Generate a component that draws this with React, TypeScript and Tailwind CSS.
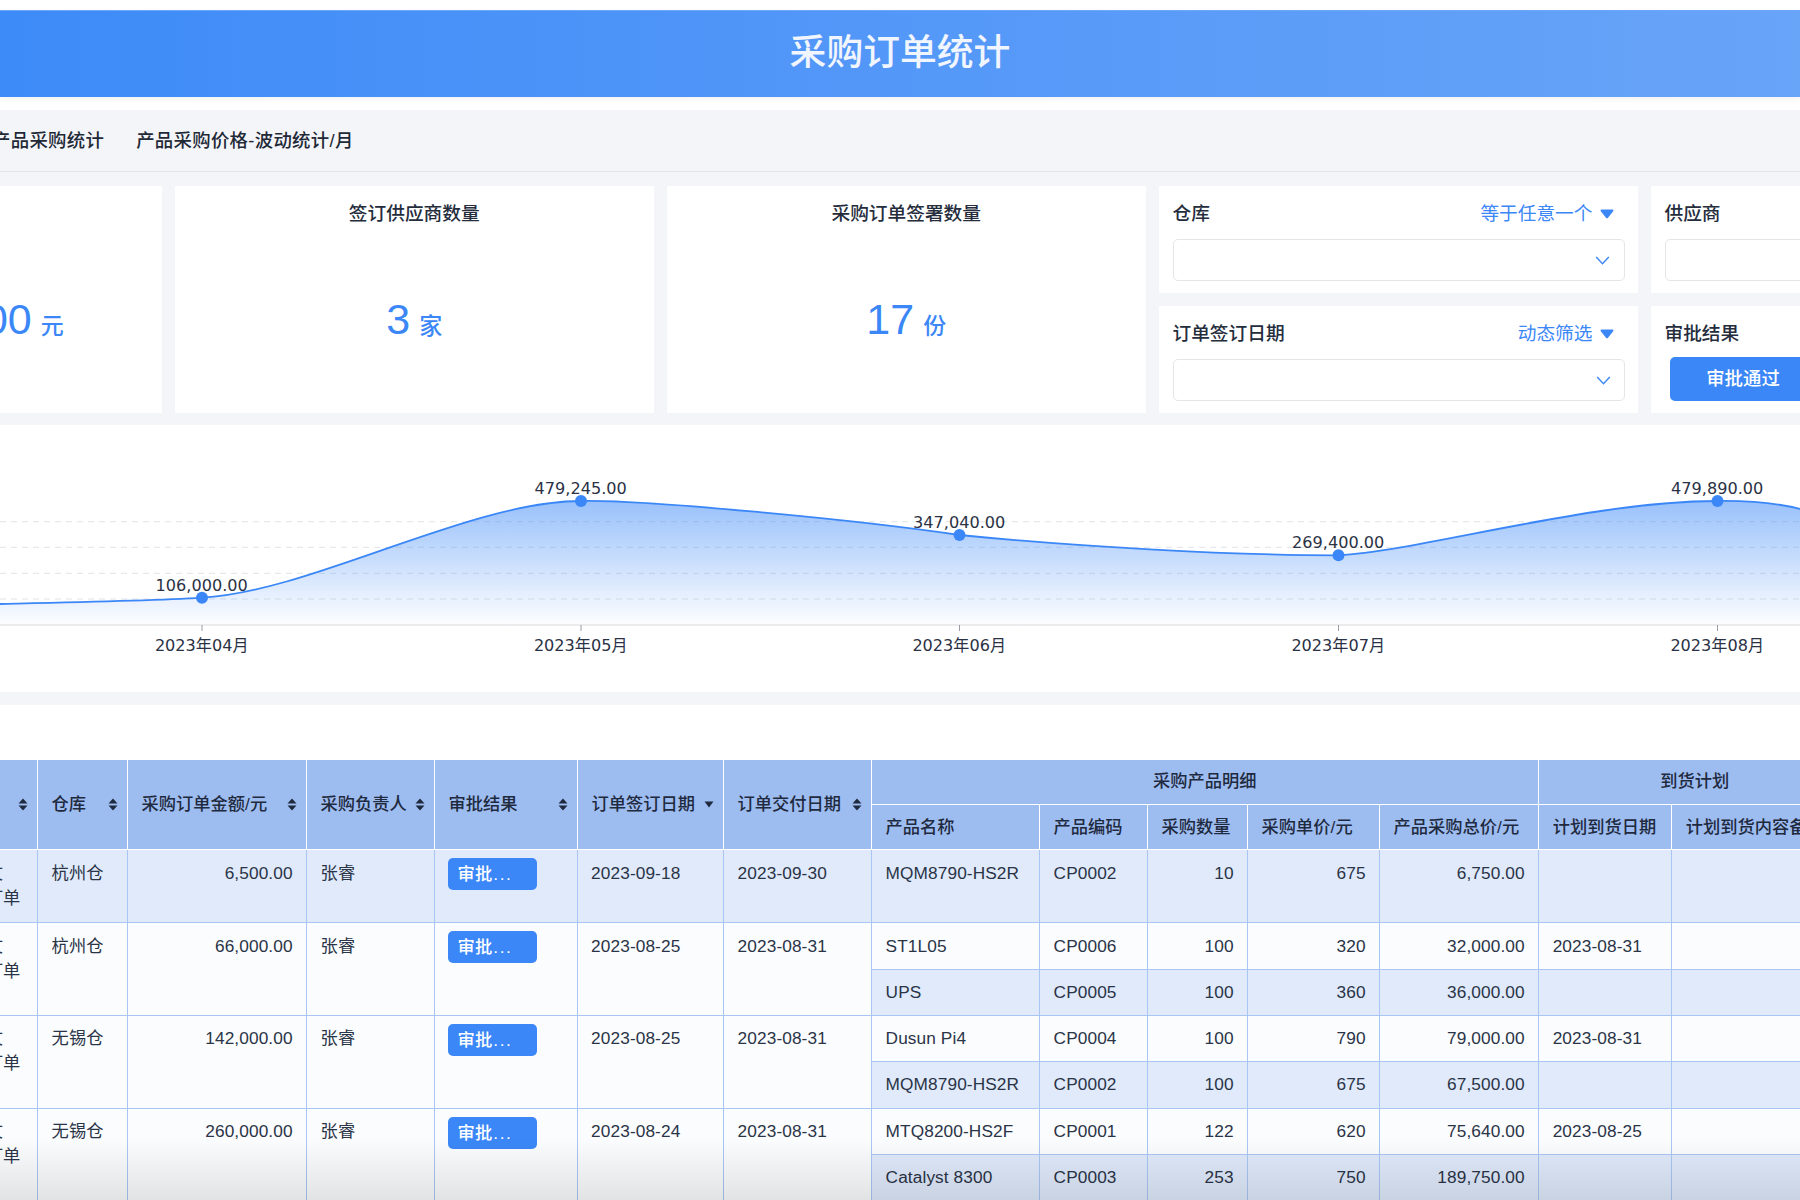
import React from "react";

const FONT = "[font-family:'Liberation_Sans','Noto_Sans_CJK_SC',sans-serif]";
const CHART_FONT = "[font-family:'DejaVu_Sans','Noto_Sans_CJK_SC',sans-serif]";

function Sort() {
  return (
    <svg viewBox="0 0 10 13" className="w-[10px] h-[13px] shrink-0 fill-[#1f2a3f]">
      <path d="M5 .5 9.5 5.5H.5Z" />
      <path d="M5 12.5 9.5 7.5H.5Z" />
    </svg>
  );
}

function SortDown() {
  return (
    <svg viewBox="0 0 10 7" className="w-[10px] h-[7px] shrink-0 fill-[#1f2a3f]">
      <path d="M5 6.5 9.5 .5H.5Z" />
    </svg>
  );
}

function Caret() {
  return (
    <svg viewBox="0 0 14 10" className="w-[14px] h-[10px] fill-[#3b87f7] ml-[7px]">
      <path d="M1.6 .6h10.8c.9 0 1.4 1 .8 1.7L7.8 8.9c-.4.5-1.2.5-1.6 0L.8 2.3C.2 1.6.7.6 1.6.6Z" />
    </svg>
  );
}

function Chevron() {
  return (
    <svg viewBox="0 0 16 10" className="w-[15px] h-[9px] fill-none stroke-[#3b87f7] stroke-[1.6]">
      <path d="M1 1.2 8 8.6 15 1.2" />
    </svg>
  );
}

function StatCard({ title, value, unit }: { title: string; value: string; unit: string }) {
  return (
    <div className="w-[479.5px] shrink-0 bg-white flex flex-col items-center pt-[15px]">
      <div className="text-[18.7px] leading-[26px] font-medium text-[#252d3d]">{title}</div>
      <div className="mt-[64px] flex items-baseline text-[#3b87f7]">
        <span className="text-[43px] leading-[56px]">{value}</span>
        <span className="text-[23px] font-medium ml-[9px]">{unit}</span>
      </div>
    </div>
  );
}

function FilterCard({
  title,
  mode,
  chevronPad,
}: {
  title: string;
  mode?: string;
  chevronPad: string;
}) {
  return (
    <div className="bg-white h-[107px] pt-[15px] pl-[14px] pr-[13.5px]">
      <div className="flex items-center justify-between h-[26px] pr-[11px]">
        <span className="text-[18.7px] font-medium text-[#252d3d]">{title}</span>
        {mode && (
          <span className="flex items-center text-[18.7px] text-[#3b87f7]">
            {mode}
            <Caret />
          </span>
        )}
      </div>
      <div className={`mt-[12px] h-[42px] w-full border border-[#e4e6ea] rounded-[5px] flex items-center justify-end ${chevronPad}`}>
        <Chevron />
      </div>
    </div>
  );
}

const HEAD = "bg-[#9dbdf1] border border-white text-[17.25px] font-medium text-[#1f2a3f] whitespace-nowrap";

function HeadCell({ label, icon }: { label: string; icon?: React.ReactNode }) {
  return (
    <th rowSpan={2} className={`${HEAD} text-left pl-[14px] pr-[9px]`}>
      <div className="flex items-center justify-between">
        <span>{label}</span>
        {icon}
      </div>
    </th>
  );
}

function SubHead({ label }: { label: string }) {
  return <th className={`${HEAD} text-left pl-[14px] pt-[2px] overflow-hidden`}>{label}</th>;
}

const CELL = "border border-[#a9c5f3] pl-[14px] pr-[13px] align-top text-[17.25px] leading-[25px] tracking-[0.1px] text-[#2a3447] whitespace-nowrap";
const WHITE = "bg-[#fbfcfe]";
const STRIPE = "bg-[#e0eafb]";
const PAD_LOW = "pt-[11px] pb-[8px]";
const PAD_HIGH = "pt-[10px] pb-[9px]";

type Line = { name: string; code: string; qty: string; price: string; total: string; date: string };
type Group = {
  wh: string;
  amount: string;
  sign: string;
  deliver: string;
  lines: Line[];
  striped?: boolean;
  low?: boolean;
  heights: string[];
};

const groups: Group[] = [
  {
    wh: "杭州仓",
    amount: "6,500.00",
    sign: "2023-09-18",
    deliver: "2023-09-30",
    striped: true,
    low: true,
    heights: ["h-[73px]"],
    lines: [{ name: "MQM8790-HS2R", code: "CP0002", qty: "10", price: "675", total: "6,750.00", date: "" }],
  },
  {
    wh: "杭州仓",
    amount: "66,000.00",
    sign: "2023-08-25",
    deliver: "2023-08-31",
    low: true,
    heights: ["h-[47px]", "h-[46px]"],
    lines: [
      { name: "ST1L05", code: "CP0006", qty: "100", price: "320", total: "32,000.00", date: "2023-08-31" },
      { name: "UPS", code: "CP0005", qty: "100", price: "360", total: "36,000.00", date: "" },
    ],
  },
  {
    wh: "无锡仓",
    amount: "142,000.00",
    sign: "2023-08-25",
    deliver: "2023-08-31",
    heights: ["h-[46px]", "h-[47px]"],
    lines: [
      { name: "Dusun Pi4", code: "CP0004", qty: "100", price: "790", total: "79,000.00", date: "2023-08-31" },
      { name: "MQM8790-HS2R", code: "CP0002", qty: "100", price: "675", total: "67,500.00", date: "" },
    ],
  },
  {
    wh: "无锡仓",
    amount: "260,000.00",
    sign: "2023-08-24",
    deliver: "2023-08-31",
    heights: ["h-[46px]", "h-[46px]"],
    lines: [
      { name: "MTQ8200-HS2F", code: "CP0001", qty: "122", price: "620", total: "75,640.00", date: "2023-08-25" },
      { name: "Catalyst 8300", code: "CP0003", qty: "253", price: "750", total: "189,750.00", date: "" },
    ],
  },
];

function DataTable() {
  return (
    <table className="table-fixed border-collapse w-[1932px] shrink-0 -ml-[81.4px]">
      <colgroup>
        <col className="w-[118px]" />
        <col className="w-[90px]" />
        <col className="w-[179px]" />
        <col className="w-[128px]" />
        <col className="w-[143px]" />
        <col className="w-[146px]" />
        <col className="w-[148px]" />
        <col className="w-[168px]" />
        <col className="w-[108px]" />
        <col className="w-[100px]" />
        <col className="w-[132px]" />
        <col className="w-[159px]" />
        <col className="w-[133px]" />
        <col className="w-[180px]" />
      </colgroup>
      <thead>
        <tr className="h-[45px]">
          <HeadCell label="订单类" icon={<Sort />} />
          <HeadCell label="仓库" icon={<Sort />} />
          <HeadCell label="采购订单金额/元" icon={<Sort />} />
          <HeadCell label="采购负责人" icon={<Sort />} />
          <HeadCell label="审批结果" icon={<Sort />} />
          <HeadCell label="订单签订日期" icon={<SortDown />} />
          <HeadCell label="订单交付日期" icon={<Sort />} />
          <th colSpan={5} className={`${HEAD} text-center`}>采购产品明细</th>
          <th colSpan={2} className={`${HEAD} text-center`}>到货计划</th>
        </tr>
        <tr className="h-[45px]">
          <SubHead label="产品名称" />
          <SubHead label="产品编码" />
          <SubHead label="采购数量" />
          <SubHead label="采购单价/元" />
          <SubHead label="产品采购总价/元" />
          <SubHead label="计划到货日期" />
          <SubHead label="计划到货内容备注" />
        </tr>
      </thead>
      <tbody>
        {groups.flatMap((g, gi) =>
          g.lines.map((l, li) => {
            const bg = g.striped || li === 1 ? STRIPE : WHITE;
            const mbg = g.striped ? STRIPE : WHITE;
            const mergedPad = g.low ? PAD_LOW : PAD_HIGH;
            const pad = g.low && li === 0 ? PAD_LOW : PAD_HIGH;
            return (
              <tr key={`${gi}-${li}`} className={g.heights[li]}>
                {li === 0 && (
                  <>
                    <td rowSpan={g.lines.length} className={`${CELL} ${mergedPad} ${mbg}`}>
                      <div>采购合文</div>
                      <div>采购类订单</div>
                    </td>
                    <td rowSpan={g.lines.length} className={`${CELL} ${mergedPad} ${mbg}`}>{g.wh}</td>
                    <td rowSpan={g.lines.length} className={`${CELL} ${mergedPad} ${mbg} text-right`}>{g.amount}</td>
                    <td rowSpan={g.lines.length} className={`${CELL} ${mergedPad} ${mbg}`}>张睿</td>
                    <td rowSpan={g.lines.length} className={`${CELL} ${mbg} !pt-[8px] !pb-0 !px-[13px]`}>
                      <div className="h-[32px] w-[89px] rounded-[5px] bg-[#3b87f7] text-white text-[17.25px] font-medium flex items-center pl-[10px]">
                        审批<span className="tracking-[1.6px] ml-[1px]">...</span>
                      </div>
                    </td>
                    <td rowSpan={g.lines.length} className={`${CELL} ${mergedPad} ${mbg} !pl-[13.5px]`}>{g.sign}</td>
                    <td rowSpan={g.lines.length} className={`${CELL} ${mergedPad} ${mbg}`}>{g.deliver}</td>
                  </>
                )}
                <td className={`${CELL} ${pad} ${bg}`}>{l.name}</td>
                <td className={`${CELL} ${pad} ${bg}`}>{l.code}</td>
                <td className={`${CELL} ${pad} ${bg} text-right`}>{l.qty}</td>
                <td className={`${CELL} ${pad} ${bg} text-right`}>{l.price}</td>
                <td className={`${CELL} ${pad} ${bg} text-right`}>{l.total}</td>
                <td className={`${CELL} ${pad} ${bg}`}>{l.date}</td>
                <td className={`${CELL} ${pad} ${bg}`}></td>
              </tr>
            );
          })
        )}
      </tbody>
    </table>
  );
}

const CURVE =
  "M0 179 C70 177.5 150 176 202 172.7 C310 167 470 76 581 76 C640 74.5 850 94 959.5 110 C1070 121 1230 130.5 1338.5 130.3 C1420 126 1590 76 1717.5 76 C1760 75.5 1785 80 1800 84";

const POINTS = [
  { x: 202, y: 172.7, v: "106,000.00", m: "2023年04月", ly: 166 },
  { x: 581, y: 76, v: "479,245.00", m: "2023年05月", ly: 69 },
  { x: 959.5, y: 110, v: "347,040.00", m: "2023年06月", ly: 103 },
  { x: 1338.5, y: 130.3, v: "269,400.00", m: "2023年07月", ly: 123 },
  { x: 1717.5, y: 76, v: "479,890.00", m: "2023年08月", ly: 69 },
];

function Chart() {
  return (
    <svg width="1800" height="267" viewBox="0 0 1800 267" className={`block bg-white ${CHART_FONT}`}>
      <defs>
        <linearGradient id="area" x1="0" y1="76" x2="0" y2="200" gradientUnits="userSpaceOnUse">
          <stop offset="0" stopColor="#3b87f7" stopOpacity="0.52" />
          <stop offset="1" stopColor="#3b87f7" stopOpacity="0.01" />
        </linearGradient>
      </defs>
      {[96.7, 122.3, 148.3, 174].map((y) => (
        <line key={y} x1="0" x2="1800" y1={y} y2={y} stroke="#e2e3e6" strokeWidth="1" strokeDasharray="6 5" />
      ))}
      <path d={`${CURVE} L1800 200 L0 200 Z`} fill="url(#area)" />
      <line x1="0" x2="1800" y1="200" y2="200" stroke="#d8d9dc" strokeWidth="1" />
      <path d={CURVE} fill="none" stroke="#3b87f7" strokeWidth="1.8" />
      {POINTS.map((p) => (
        <g key={p.m}>
          <line x1={p.x} x2={p.x} y1="200" y2="206" stroke="#9a9ca3" strokeWidth="1" />
          <circle cx={p.x} cy={p.y} r="6" fill="#3b87f7" />
          <text x={p.x - 0.3} y={p.ly} textAnchor="middle" fontSize="16.1" fill="#2b3245">{p.v}</text>
          <text x={p.x - 0.3} y="226" textAnchor="middle" fontSize="16.1" fill="#2b3245">{p.m}</text>
        </g>
      ))}
    </svg>
  );
}

export default function App() {
  return (
    <div className={`relative w-[1800px] h-[1200px] overflow-hidden bg-white flex flex-col ${FONT}`}>
      <div className="mt-[10px] h-[87px] shrink-0 bg-linear-to-r from-[#3d8bf8] to-[#68a4f8] border-t border-[#6ea6f8] flex items-center justify-center pb-[2px] shadow-[0_2px_6px_rgba(0,0,0,0.06)]">
        <h1 className="text-[36.8px] font-medium text-[#f1f5fd] leading-none">采购订单统计</h1>
      </div>

      <div className="mt-[13px] shrink-0 bg-[#f4f5f9]">
        <div className="h-[62px] border-b border-[#e4e5e9] flex items-center gap-[32px] -ml-[8px] text-[18.4px] tracking-[0.3px] text-[#1f2937] font-medium">
          <span>产品采购统计</span>
          <span>产品采购价格-波动统计/月</span>
        </div>
        <div className="flex gap-[12.5px] pt-[14px] pb-[12px] -ml-[317.5px] w-[2117.5px] h-[253px]">
          <StatCard title="采购订单总金额" value="1,682,575.00" unit="元" />
          <StatCard title="签订供应商数量" value="3" unit="家" />
          <StatCard title="采购订单签署数量" value="17" unit="份" />
          <div className="grid grid-cols-2 gap-x-[12.5px] gap-y-[13px] w-[971.5px] shrink-0">
            <FilterCard title="仓库" mode="等于任意一个" chevronPad="pr-[14px]" />
            <FilterCard title="供应商" chevronPad="pr-[14px]" />
            <FilterCard title="订单签订日期" mode="动态筛选" chevronPad="pr-[13px]" />
            <div className="bg-white h-[107px] pt-[15px] pl-[14px]">
              <div className="h-[26px] flex items-center text-[18.7px] font-medium text-[#252d3d]">审批结果</div>
              <div className="mt-[10px] ml-[5px] h-[44px] w-[147px] rounded-[5px] bg-[#3b87f7] text-white text-[18.4px] font-medium flex items-center justify-center">审批通过</div>
            </div>
          </div>
        </div>
      </div>

      <div className="shrink-0">
        <Chart />
      </div>
      <div className="h-[13px] shrink-0 bg-[#f4f5f9]" />
      <div className="h-[54px] shrink-0 bg-white" />
      <DataTable />

      <div className="absolute inset-x-0 bottom-0 h-[62px] pointer-events-none bg-linear-to-b from-black/0 to-black/10" />
    </div>
  );
}
